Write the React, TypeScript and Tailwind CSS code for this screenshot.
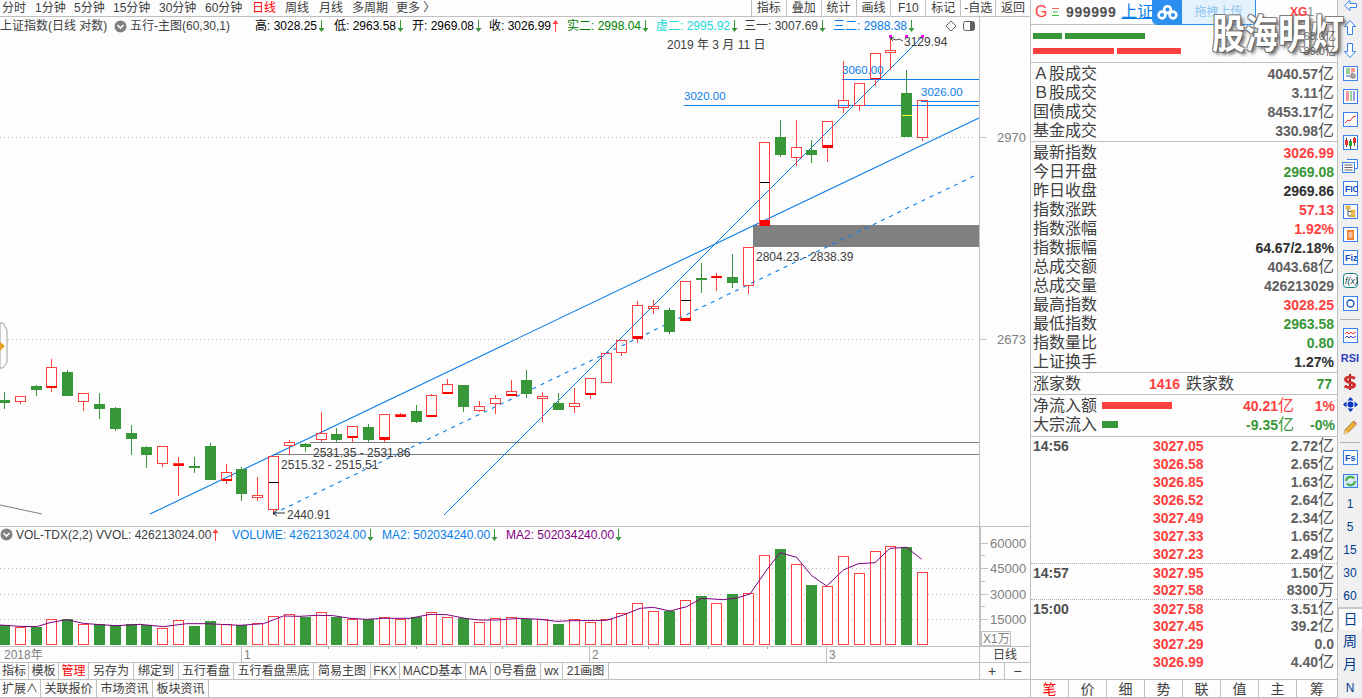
import React from "react";

const GREEN = "#389738";
const RED = "#ff4040";
const BLUE = "#0a7ee8";
const PURPLE = "#800080";

type Candle = [string, number, number, number, number, number?, number?];

// kind, body top, body bottom, wick top, wick bottom, thick base, mid mark
const candles: Candle[] = [
  ["g", 400, 403, 392, 409],
  ["r", 396, 401, 396, 404],
  ["g", 386, 390, 385, 396],
  ["r", 367, 387, 359, 392, 2],
  ["g", 372, 396, 370, 396],
  ["r", 393, 401, 393, 411],
  ["g", 404, 409, 393, 419],
  ["g", 408, 429, 407, 431],
  ["g", 433, 439, 425, 455],
  ["g", 447, 455, 446, 468],
  ["r", 446, 463, 446, 467],
  ["r", 463, 465, 457, 496, 2],
  ["g", 466, 468, 457, 473],
  ["g", 446, 480, 443, 480],
  ["r", 472, 480, 464, 484, 2],
  ["g", 469, 494, 467, 501],
  ["r", 495, 497, 477, 501],
  ["r", 456, 509, 456, 515, 0, 482],
  ["r", 442, 445, 440, 455],
  ["g", 444, 447, 443, 452],
  ["r", 433, 439, 412, 442],
  ["g", 434, 440, 428, 442],
  ["r", 426, 437, 426, 442, 2],
  ["g", 427, 440, 424, 442],
  ["r", 414, 439, 414, 442, 3],
  ["r", 414, 416, 413, 417, 2],
  ["g", 411, 422, 405, 423],
  ["r", 395, 416, 394, 417, 2],
  ["r", 384, 393, 379, 394, 2],
  ["g", 385, 407, 385, 412],
  ["r", 406, 410, 401, 412],
  ["r", 398, 403, 395, 414],
  ["r", 391, 395, 380, 396, 2],
  ["g", 380, 394, 370, 398],
  ["r", 396, 398, 392, 422],
  ["g", 403, 410, 393, 410],
  ["r", 403, 406, 388, 413],
  ["r", 378, 394, 378, 399, 2],
  ["r", 353, 382, 353, 382],
  ["r", 340, 352, 340, 356],
  ["r", 305, 338, 301, 343, 3],
  ["r", 306, 308, 300, 314],
  ["g", 310, 332, 308, 334],
  ["r", 281, 320, 281, 321, 3, 300],
  ["g", 278, 280, 263, 293],
  ["r", 276, 277, 273, 291, 2],
  ["g", 277, 283, 254, 288],
  ["r", 247, 285, 247, 294],
  ["r", 142, 225, 142, 225, 6, 182],
  ["g", 137, 155, 120, 157],
  ["r", 147, 157, 120, 166],
  ["g", 150, 155, 140, 163],
  ["r", 121, 147, 121, 162, 3],
  ["r", 100, 107, 61, 113],
  ["r", 83, 105, 83, 111],
  ["r", 53, 78, 53, 86, 1],
  ["r", 50, 52, 36, 70],
  ["g", 93, 137, 70, 137, 0, 115],
  ["r", 100, 137, 100, 141],
];

const volTops = [
  315, 322, 321, 298, 298, 313, 312, 316, 312, 314, 325, 301, 318, 303, 312, 316, 310, 289, 283, 290,
  277, 291, 298, 298, 292, 298, 291, 277, 292, 294, 307, 295, 292, 297, 296, 312, 296, 307, 296, 280,
  250, 274, 272, 241, 228, 250, 222, 220, 106, 87, 133, 195, 199, 109, 160, 94, 79, 81, 157,
];

const maLeft = [
  [0, 315], [60, 319], [110, 320], [150, 308], [200, 299], [250, 310], [300, 314], [350, 317], [420, 313],
  [490, 320], [560, 311], [620, 311], [720, 316], [790, 311], [850, 288], [900, 289], [950, 286], [1000, 287],
  [1050, 295], [1100, 298], [1150, 295], [1230, 295], [1290, 283], [1340, 284], [1400, 296], [1440, 300],
  [1490, 300], [1560, 295],
];
const maRight = [
  [0, 295], [60, 298], [110, 304], [160, 302], [260, 301], [310, 285], [360, 265], [400, 262], [450, 273],
  [500, 260], [545, 235], [610, 239], [650, 234], [690, 222], [740, 150], [780, 98], [830, 112], [875, 167],
  [920, 198], [970, 150], [1015, 131], [1065, 128], [1110, 85], [1160, 82], [1205, 118],
];
const maPoints = [
  ...maLeft.map(([x, y]) => `${x / 3},${520 + y / 3}`),
  ...maRight.map(([x, y]) => `${520 + x / 3},${520 + y / 3}`),
].join(" ");

const cx = (i: number) => Math.round(4 + 15.83 * i);

function Arrow({ up }: { up?: boolean }) {
  const c = up ? RED : GREEN;
  return (
    <svg width="7" height="14" viewBox="0 0 7 14" className="inline-block ml-[1px] align-[-3px]">
      {up ? <path d="M3.5 13V3" stroke={c} strokeWidth="1" /> : <path d="M3.5 1v10" stroke={c} strokeWidth="1" />}
      {up ? <path d="M0.5 5L3.5 1l3 4z" fill={c} /> : <path d="M0.5 9l3 4 3-4z" fill={c} />}
    </svg>
  );
}

function Chevron() {
  return (
    <svg width="13" height="13" viewBox="0 0 13 13">
      <circle cx="6.5" cy="6.5" r="6" fill="#808080" />
      <path d="M3.5 5l3 3 3-3" stroke="#fff" strokeWidth="1.6" fill="none" />
    </svg>
  );
}

function PriceChart() {
  return (
    <svg viewBox="0 17 1030 509" width="1030" height="509" className="absolute inset-0">
      <line x1="0" x2="975" y1="137.5" y2="137.5" stroke="#b8b8b8" strokeDasharray="1 3" />
      <line x1="0" x2="975" y1="339.5" y2="339.5" stroke="#b8b8b8" strokeDasharray="1 3" />
      <line x1="979.5" x2="979.5" y1="17" y2="526" stroke="#c0c0c0" />
      <line x1="979" x2="986" y1="137.5" y2="137.5" stroke="#c0c0c0" />
      <line x1="979" x2="986" y1="339.5" y2="339.5" stroke="#c0c0c0" />
      <text x="997" y="142" fontSize="13" fill="#808080">2970</text>
      <text x="997" y="344" fontSize="13" fill="#808080">2673</text>

      <rect x="753" y="225" width="226" height="22" fill="#808080" />
      <g shapeRendering="crispEdges">
        <line x1="310" x2="979" y1="442.5" y2="442.5" stroke="#808080" />
        <line x1="273" x2="979" y1="454.5" y2="454.5" stroke="#808080" />
        <line x1="684" x2="979" y1="105.5" y2="105.5" stroke={BLUE} />
        <line x1="842" x2="979" y1="79.5" y2="79.5" stroke={BLUE} />
        <line x1="921" x2="979" y1="101.5" y2="101.5" stroke={BLUE} />
      </g>
      <line x1="0" y1="505" x2="42" y2="514" stroke="#808080" />

      <line x1="150" y1="514" x2="979" y2="118" stroke={BLUE} strokeWidth="1.1" />
      <line x1="444" y1="515" x2="922" y2="37" stroke={BLUE} strokeWidth="1" />
      <line x1="273" y1="514" x2="976" y2="175" stroke={BLUE} strokeWidth="1.1" strokeDasharray="4 5" />

      {candles.map(([kind, top, bottom, wickTop, wickBottom, thick, mid], i) => {
        const x = cx(i);
        const c = kind === "g" ? GREEN : RED;
        return (
          <g key={i} shapeRendering="crispEdges">
            {kind === "g" ? (
              <>
                <line x1={x + 0.5} x2={x + 0.5} y1={wickTop} y2={wickBottom} stroke={c} />
                <rect x={x - 5} y={top} width="11" height={bottom - top} fill={c} />
              </>
            ) : (
              <>
                <line x1={x + 0.5} x2={x + 0.5} y1={wickTop} y2={top} stroke={c} />
                <line x1={x + 0.5} x2={x + 0.5} y1={bottom} y2={wickBottom} stroke={c} />
                <rect x={x - 4.5} y={top + 0.5} width="10" height={bottom - top} fill="none" stroke={c} />
                {thick ? <rect x={x - 4} y={bottom - thick + 1} width="10" height={thick} fill="#ff0000" /> : null}
              </>
            )}
            {mid ? (
              <line x1={x - 4} x2={x + 6} y1={mid + 0.5} y2={mid + 0.5} stroke={kind === "g" ? "#ffff40" : "#000"} />
            ) : null}
          </g>
        );
      })}

      <rect x="889" y="35" width="3" height="3" fill="#ff00ff" />
      <rect x="905" y="35" width="3" height="3" fill="#ff00ff" />
      <rect x="921" y="35" width="3" height="3" fill="#ff00ff" />
      <path d="M890 38l3 3M890 38l4-1M890 38l6 2 3-1 4 2" stroke="#505050" fill="none" />
      <path d="M273 513h12M273 513l4-3M273 513l4 3" stroke="#303030" fill="none" />

      <path d="M0 323h3l4 7v32l-4 6H0z" fill="#fdfdfd" stroke="#a0a0a0" />
      <path d="M0 342l5 4-5 5z" fill="#e8a020" />

      <g fontSize="12" fill="#404040">
        <text x="904" y="46">3129.94</text>
        <text x="281" y="469">2515.32 - 2515.51</text>
        <text x="313" y="457">2531.35 - 2531.86</text>
        <text x="287" y="519">2440.91</text>
        <text x="756" y="261">2804.23 - 2838.39</text>
        <text x="667" y="49">2019 年 3 月 11 日</text>
      </g>
      <g fontSize="11.5" fill={BLUE}>
        <text x="842" y="74">3060.00</text>
        <text x="921" y="96">3026.00</text>
        <text x="684" y="100">3020.00</text>
      </g>
    </svg>
  );
}

function VolumeChart() {
  return (
    <svg viewBox="0 527 1030 119" width="1030" height="119" className="absolute inset-0">
      {[568.5, 594.5, 619.5].map((y) => (
        <line key={y} x1="0" x2="979" y1={y} y2={y} stroke="#b8b8b8" strokeDasharray="1 3" />
      ))}
      {volTops.map((z, i) => {
        const x = cx(i);
        const top = Math.round(520 + z / 3);
        return candles[i][0] === "g" ? (
          <rect key={i} x={x - 5} y={top} width="11" height={645 - top} fill={GREEN} shapeRendering="crispEdges" />
        ) : (
          <rect
            key={i}
            x={x - 4.5}
            y={top + 0.5}
            width="10"
            height={644 - top}
            fill="#fdfdfd"
            stroke={RED}
            shapeRendering="crispEdges"
          />
        );
      })}
      <polyline points={maPoints} fill="none" stroke={PURPLE} strokeWidth="1" />
      <rect x="979" y="527" width="2" height="119" fill="#c0c0c0" />
      {[543, 568, 594, 619].map((y) => (
        <line key={y} x1="981" x2="988" y1={y + 0.5} y2={y + 0.5} stroke="#c0c0c0" />
      ))}
      {[555, 581, 606].map((y) => (
        <line key={y} x1="981" x2="985" y1={y + 0.5} y2={y + 0.5} stroke="#c0c0c0" />
      ))}
      <g fontSize="13" fill="#808080">
        <text x="990" y="548">60000</text>
        <text x="990" y="573">45000</text>
        <text x="990" y="599">30000</text>
        <text x="990" y="624">15000</text>
      </g>
      <rect x="981.5" y="631.5" width="29" height="14" fill="#fdfdfd" stroke="#c0c0c0" />
      <text x="983" y="643" fontSize="12" fill="#808080">X1万</text>
    </svg>
  );
}

function AxisStrip() {
  return (
    <svg viewBox="0 647 979 15" width="979" height="15" className="block">
      {[241.5, 589.5, 826.5].map((x) => (
        <line key={x} x1={x} x2={x} y1="647" y2="662" stroke="#c0c0c0" />
      ))}
      {[328.5, 416.5, 502.5, 648.5, 708.5, 767.5].map((x) => (
        <line key={x} x1={x} x2={x} y1="647" y2="649" stroke="#a0a0a0" />
      ))}
      <g fontSize="12" fill="#808080">
        <text x="4" y="659">2018年</text>
        <text x="244" y="659">1</text>
        <text x="592" y="659">2</text>
        <text x="829" y="659">3</text>
      </g>
    </svg>
  );
}

const tabsOne = [
  ["指标", "w-[29px]"],
  ["模板", "w-[30px]"],
  ["管理", "w-[30px] text-[#ff0000]"],
  ["另存为", "w-[45px]"],
  ["绑定到", "w-[45px]"],
  ["五行看盘", "w-[55px]"],
  ["五行看盘黑底", "w-[80px]"],
  ["简易主图", "w-[57px]"],
  ["FKX", "w-[29px]"],
  ["MACD基本", "w-[66px]"],
  ["MA", "w-[25px]"],
  ["0号看盘", "w-[50px]"],
  ["wx", "w-[22px]"],
  ["21画图", "w-[46px]"],
];
const tabsTwo = [
  ["扩展∧", "w-[41px]"],
  ["关联报价", "w-[56px]"],
  ["市场资讯", "w-[56px]"],
  ["板块资讯", "w-[56px]"],
];

function LeftColumn() {
  return (
    <div className="w-[1030px] flex flex-col shrink-0 text-[12px] text-[#404040]">
      {/* period bar */}
      <div className="h-[17px] flex items-center border-b border-[#c0c0c0] pl-[2px] leading-none">
        <span className="w-[33px]">分时</span>
        <span className="w-[39px]">1分钟</span>
        <span className="w-[39px]">5分钟</span>
        <span className="w-[46px]">15分钟</span>
        <span className="w-[46px]">30分钟</span>
        <span className="w-[47px]">60分钟</span>
        <span className="w-[33px] text-[#ff0000]">日线</span>
        <span className="w-[34px]">周线</span>
        <span className="w-[33px]">月线</span>
        <span className="w-[44px]">多周期</span>
        <span>更多 〉</span>
        <div className="ml-auto flex h-full">
          {["指标", "叠加", "统计", "画线", "F10", "标记", "-自选", "返回"].map((t) => (
            <span key={t} className="w-[34.9px] flex items-center justify-center border-l border-[#c0c0c0]">
              {t}
            </span>
          ))}
        </div>
      </div>

      {/* price panel */}
      <div className="relative h-[510px] border-b border-[#c0c0c0]">
        <PriceChart />
        <div className="relative h-[18px] flex items-center whitespace-nowrap">
          <span className="w-[114px]">上证指数(日线 对数)</span>
          <span className="w-[16px] flex"><Chevron /></span>
          <span className="w-[125px]">五行-主图(60,30,1)</span>
          <span className="w-[79px] text-black">高: 3028.25<Arrow /></span>
          <span className="w-[78px] text-black">低: 2963.58<Arrow /></span>
          <span className="w-[77px] text-black">开: 2969.08<Arrow /></span>
          <span className="w-[78px] text-black">收: 3026.99<Arrow up /></span>
          <span className="w-[89px] text-[#008000]">实二: 2998.04<Arrow /></span>
          <span className="w-[88px] text-[#20d8d8]">虚二: 2995.92<Arrow /></span>
          <span className="w-[89px] text-[#404040]">三一: 3007.69<Arrow /></span>
          <span className="w-[112px] text-[#0a7ee8]">三二: 2988.38<Arrow /></span>
          <svg width="12" height="12" viewBox="0 0 12 12">
            <path d="M6 1l5 5-5 5-5-5z" fill="none" stroke="#606060" />
          </svg>
          <svg width="13" height="12" viewBox="0 0 13 12" className="ml-[6px]">
            <rect x="0.5" y="1.5" width="11" height="9" rx="2" fill="none" stroke="#606060" />
            <rect x="7" y="2" width="4" height="8" fill="#606060" />
          </svg>
        </div>
      </div>

      {/* volume panel */}
      <div className="relative h-[120px] border-b border-[#c0c0c0]">
        <VolumeChart />
        <div className="relative h-[15px] flex items-center whitespace-nowrap">
          <span className="w-[16px] flex"><Chevron /></span>
          <span className="w-[80px]">VOL-TDX(2,2)</span>
          <span className="w-[136px]">VVOL: 426213024.00<Arrow up /></span>
          <span className="w-[150px] text-[#0a7ee8]">VOLUME: 426213024.00<Arrow /></span>
          <span className="w-[124px] text-[#0a7ee8]">MA2: 502034240.00<Arrow /></span>
          <span className="text-[#800080]">MA2: 502034240.00<Arrow /></span>
        </div>
      </div>

      {/* time axis */}
      <div className="h-[16px] flex border-b border-[#c0c0c0]">
        <div className="w-[979px]"><AxisStrip /></div>
        <div className="flex-1 border-l border-[#c0c0c0] flex items-center justify-center text-[#404040]">日线</div>
      </div>

      {/* template tabs */}
      <div className="h-[17px] flex border-b border-[#c0c0c0]">
        <div className="w-[979px] flex">
          {tabsOne.map(([t, w]) => (
            <span key={t} className={`${w} shrink-0 flex items-center justify-center border-r border-[#c0c0c0]`}>{t}</span>
          ))}
        </div>
        <span className="w-[26px] border-l border-r border-[#c0c0c0] flex items-center justify-center text-[14px]">+</span>
        <span className="flex-1 flex items-center justify-center text-[14px]">−</span>
      </div>
      <div className="h-[18px] flex border-b border-[#c0c0c0]">
        {tabsTwo.map(([t, w]) => (
          <span key={t} className={`${w} shrink-0 flex items-center justify-center border-r border-[#c0c0c0]`}>{t}</span>
        ))}
      </div>
    </div>
  );
}

function Stat({ label, value, unit, color }: { label: string; value: string; unit?: string; color?: string }) {
  return (
    <div className="h-[19px] flex items-center justify-between pl-[2px] pr-[3px]">
      <span className="text-[16px] leading-none text-[#404040]">{label}</span>
      <span className={`flex items-center text-[14px] font-bold leading-none ${color ?? "text-[#606060]"}`}>
        {value}
        {unit ? <span className="text-[16px] font-normal text-[#505050]">{unit}</span> : null}
      </span>
    </div>
  );
}

const ticks: [string, string, string, string, boolean?][] = [
  ["14:56", "3027.05", "2.72", "亿"],
  ["", "3026.58", "2.65", "亿"],
  ["", "3026.85", "1.63", "亿"],
  ["", "3026.52", "2.64", "亿"],
  ["", "3027.49", "2.34", "亿"],
  ["", "3027.33", "1.65", "亿"],
  ["", "3027.23", "2.49", "亿"],
  ["14:57", "3027.95", "1.50", "亿", true],
  ["", "3027.58", "8300", "万"],
  ["15:00", "3027.58", "3.51", "亿", true],
  ["", "3027.45", "39.2", "亿"],
  ["", "3027.29", "0.0", ""],
  ["", "3026.99", "4.40", "亿"],
];

function InfoPanel() {
  const r = "text-[#ff4040]";
  const g = "text-[#389738]";
  const k = "text-[#303030]";
  return (
    <div className="relative w-[308px] shrink-0 border-l border-r border-[#c0c0c0] flex flex-col">
      {/* code header */}
      <div className="h-[25px] flex items-center border-b border-[#c0c0c0] pl-[4px] relative">
        <span className="text-[16px] text-[#ff4040] w-[17px]">G</span>
        <svg width="8" height="10" viewBox="0 0 8 10" className="mr-[6px]">
          <path d="M0 1.5h7" stroke="#ff6060" />
          <path d="M1 5h5" stroke="#30c030" />
          <path d="M0 8.5h7" stroke="#30c030" />
        </svg>
        <span className="text-[14px] font-bold text-[#505050] tracking-[0.6px]">999999</span>
        <span className="ml-[5px] text-[16px] text-[#0a7ee8] underline">上证指数</span>
        <span className="absolute left-[259px] top-[3px] z-10 text-[12px] font-bold text-[#ff4040]">
          XG<span className="font-normal text-[#808080]">1</span>
        </span>
      </div>

      {/* order book bars */}
      <div className="h-[38px] border-b border-[#c0c0c0] relative pl-[2px] pt-[8px]">
        <div className="flex gap-[3px]">
          <div className="w-[29px] h-[6px] bg-[#389738]" />
          <div className="w-[80px] h-[6px] bg-[#389738]" />
        </div>
        <div className="flex gap-[3px] mt-[9px]">
          <div className="w-[81px] h-[6px] bg-[#ff4040]" />
          <div className="w-[64px] h-[6px] bg-[#ff4040]" />
        </div>
        <span className="absolute z-10 right-[1px] top-[3px] text-[11px] text-[#606060]">68.0亿</span>
        <span className="absolute z-10 right-[1px] top-[18px] text-[11px] text-[#606060]">89.0亿</span>
      </div>

      <div className="h-[79px] pt-[1px] border-b border-[#c0c0c0]">
        <Stat label="Ａ股成交" value="4040.57" unit="亿" />
        <Stat label="Ｂ股成交" value="3.11" unit="亿" />
        <Stat label="国债成交" value="8453.17" unit="亿" />
        <Stat label="基金成交" value="330.98" unit="亿" />
      </div>

      <div className="h-[231px] pt-[1px] border-b border-[#c0c0c0]">
        <Stat label="最新指数" value="3026.99" color={r} />
        <Stat label="今日开盘" value="2969.08" color={g} />
        <Stat label="昨日收盘" value="2969.86" color={k} />
        <Stat label="指数涨跌" value="57.13" color={r} />
        <Stat label="指数涨幅" value="1.92%" color={r} />
        <Stat label="指数振幅" value="64.67/2.18%" color={k} />
        <Stat label="总成交额" value="4043.68" unit="亿" />
        <Stat label="总成交量" value="426213029" />
        <Stat label="最高指数" value="3028.25" color={r} />
        <Stat label="最低指数" value="2963.58" color={g} />
        <Stat label="指数量比" value="0.80" color={g} />
        <Stat label="上证换手" value="1.27%" color={k} />
      </div>

      <div className="h-[22px] border-b border-[#c0c0c0] flex items-center pl-[2px] pr-[5px]">
        <span className="w-[116px] text-[16px] leading-none text-[#404040]">涨家数</span>
        <span className="w-[37px] text-[14px] font-bold leading-none text-[#ff4040]">1416</span>
        <span className="text-[16px] leading-none text-[#404040]">跌家数</span>
        <span className="ml-auto text-[14px] font-bold leading-none text-[#389738]">77</span>
      </div>

      <div className="h-[42px] pt-[1px] border-b border-[#c0c0c0] text-[14px] font-bold">
        <div className="h-[19px] flex items-center pl-[2px] pr-[2px]">
          <span className="w-[69px] text-[16px] leading-none font-normal text-[#404040]">净流入额</span>
          <div className="w-[70px] h-[7px] bg-[#ff4040]" />
          <span className="ml-auto flex items-center leading-none text-[#ff4040]">
            40.21<span className="text-[16px] font-normal">亿</span>
          </span>
          <span className="w-[41px] text-right leading-none text-[#ff4040]">1%</span>
        </div>
        <div className="h-[19px] flex items-center pl-[2px] pr-[2px]">
          <span className="w-[69px] text-[16px] leading-none font-normal text-[#404040]">大宗流入</span>
          <div className="w-[16px] h-[7px] bg-[#389738]" />
          <span className="ml-auto flex items-center leading-none text-[#389738]">
            -9.35<span className="text-[16px] font-normal">亿</span>
          </span>
          <span className="w-[41px] text-right leading-none text-[#389738]">-0%</span>
        </div>
      </div>

      {/* tick list */}
      <div className="flex-1">
        {ticks.map(([time, price, vol, unit, sep], i) => (
          <div
            key={i}
            className={`h-[18px] flex items-center pl-[2px] pr-[3px] text-[14px] font-bold leading-none ${
              sep ? "border-t border-dotted border-[#b0b0b0]" : ""
            }`}
          >
            <span className="w-[120px] text-[#505050]">{time}</span>
            <span className="text-[#ff4040]">{price}</span>
            <span className="ml-auto flex items-center text-[#606060]">
              {vol}
              {unit ? <span className="text-[16px] font-normal text-[#505050]">{unit}</span> : null}
            </span>
          </div>
        ))}
      </div>

      <div className="h-[19px] flex border-t border-b border-[#c0c0c0] text-[14px] leading-none text-[#404040]">
        {["笔", "价", "细", "势", "联", "值", "主", "筹"].map((t, i) => (
          <span
            key={t}
            className={`flex items-center justify-center ${i === 7 ? "flex-1" : "w-[38px] border-r border-[#c0c0c0]"} ${
              i === 0 ? "text-[#ff0000]" : ""
            }`}
          >
            {t}
          </span>
        ))}
      </div>

      {/* upload widget floating over the quote header */}
      <div className="absolute left-[121px] top-0 w-[104px] h-[25px] flex rounded-b-[5px] overflow-hidden border border-[#2b8ff0] border-t-0">
        <div className="w-[29px] bg-[#2b8ff0] flex items-center justify-center">
          <svg width="21" height="15" viewBox="0 0 21 15" fill="none" stroke="#fff" strokeWidth="2.6">
            <circle cx="5" cy="10" r="3.4" />
            <circle cx="16" cy="10" r="3.4" />
            <circle cx="10.5" cy="4.6" r="3.4" />
          </svg>
        </div>
        <div className="flex-1 bg-[#e4f2fd] flex items-center justify-center text-[12px] text-[#8cc4f0]">拖拽上传</div>
      </div>

      {/* watermark */}
      <div className="absolute left-[181px] top-[13px] whitespace-nowrap text-[33px] leading-[36px] font-bold text-white origin-top scale-y-[1.2] [text-shadow:1px_1px_0_#606060,-1px_-1px_0_#808080,1px_-1px_0_#808080,-1px_1px_0_#808080,3px_3px_3px_#707070]">
        股海明灯
      </div>
    </div>
  );
}

function Box({ children }: { children: React.ReactNode }) {
  return (
    <svg width="15" height="15" viewBox="0 0 15 15">
      <rect x="0.5" y="0.5" width="14" height="14" fill="#fff" stroke="#3a80f0" />
      {children}
    </svg>
  );
}

function Slot({ children, cls }: { children: React.ReactNode; cls?: string }) {
  return <div className={`h-[23px] flex items-center justify-center shrink-0 ${cls ?? ""}`}>{children}</div>;
}

function Toolbar() {
  const n = "text-[12px] text-[#003c90]";
  const arrowStroke = { fill: "#fff", stroke: "#3a80f0", strokeWidth: 1 };
  return (
    <div className="flex-1 bg-[#f0f0f0] flex flex-col overflow-hidden">
      <div className="h-[11px] flex items-end justify-center shrink-0">
        <svg width="13" height="11" viewBox="0 0 13 11">
          <path d="M6 0.5L0.5 5.5 6 10.5V7.5h6.5v-4H6z" {...arrowStroke} />
        </svg>
      </div>
      <Slot cls="mt-[5px]">
        <svg width="12" height="15" viewBox="0 0 12 15"><path d="M6 .5L.5 6.5h3v8h5v-8h3z" {...arrowStroke} /></svg>
      </Slot>
      <Slot>
        <svg width="12" height="15" viewBox="0 0 12 15"><path d="M6 14.5L.5 8.5h3v-8h5v8h3z" {...arrowStroke} /></svg>
      </Slot>
      <Slot>
        <Box>
          <path d="M3 3h4M3 5h4M3 7h4" stroke="#30a030" />
          <path d="M8 3h4M8 5h4M8 7h2" stroke="#f03030" />
          <path d="M3 10h4" stroke="#3060c0" />
          <circle cx="10" cy="10" r="3" fill="#a0a0a0" />
        </Box>
      </Slot>
      <Slot>
        <Box>
          <path d="M3 3h3M3 5h3M3 7h3M3 9h3M3 11h3" stroke="#f03030" />
          <path d="M7 3h2M7 5h2M7 7h2M7 9h2M7 11h2" stroke="#30a030" />
          <path d="M10 3h2M10 5h2M10 7h2M10 9h2M10 11h2" stroke="#2040e0" />
        </Box>
      </Slot>
      <Slot>
        <Box>
          <path d="M2 11l3-3 2 1 3-4 3-1" stroke="#f03030" fill="none" />
        </Box>
      </Slot>
      <Slot>
        <Box>
          <path d="M3.5 3v9M7.5 4v10M11.5 2v9" stroke="#404040" />
          <rect x="2" y="5" width="3" height="5" fill="#f03030" />
          <rect x="6" y="6" width="3" height="5" fill="#30a030" />
          <rect x="10" y="3" width="3" height="5" fill="#f03030" />
        </Box>
      </Slot>
      <Slot>
        <svg width="16" height="14" viewBox="0 0 16 14">
          <path d="M5 .5h10.500v9H13" fill="#fff" stroke="#3a80f0" />
          <rect x="0.5" y="3.5" width="12" height="10" fill="#fff" stroke="#3a80f0" />
          <path d="M2.500 6h8M2.500 8.500h8M2.500 11h8" stroke="#606060" />
        </svg>
      </Slot>
      <Slot>
        <Box>
          <text x="2" y="11" fontSize="8.500" fontWeight="bold" fill="#1050c0">FIO</text>
        </Box>
      </Slot>
      <Slot>
        <Box>
          <rect x="3" y="2" width="4" height="3" fill="#f0c040" stroke="#c09020" strokeWidth=".5" />
          <rect x="8" y="6" width="4" height="3" fill="#f0c040" stroke="#c09020" strokeWidth=".5" />
          <rect x="8" y="10" width="4" height="3" fill="#f0c040" stroke="#c09020" strokeWidth=".5" />
          <path d="M5 5v7h3M5 7.500h3" stroke="#606060" fill="none" />
        </Box>
      </Slot>
      <Slot>
        <Box>
          <rect x="4" y="3" width="7" height="10" fill="#f08030" />
          <path d="M5.500 6h4M5.500 8h4M5.500 10h4" stroke="#fff" />
        </Box>
      </Slot>
      <Slot>
        <Box>
          <text x="2" y="11" fontSize="9" fontWeight="bold" fill="#1050c0">Fiz</text>
        </Box>
      </Slot>
      <Slot>
        <svg width="15" height="15" viewBox="0 0 15 15">
          <rect x="0.5" y="0.5" width="14" height="14" rx="3" fill="#fff" stroke="#108080" />
          <text x="2" y="11" fontSize="9" fontStyle="italic" fill="#104050">f(x)</text>
        </svg>
      </Slot>
      <Slot>
        <Box>
          <circle cx="7.5" cy="7.5" r="3.5" fill="none" stroke="#1050c0" strokeWidth="1.3" />
        </Box>
      </Slot>
      <div className="h-[1px] bg-[#b0b0b0] mt-[4px] mx-[2px] shrink-0" />
      <Slot cls="mt-[4px]">
        <Box>
          <path d="M2 6l2-2 2 2 2-2 2 2 3-2" stroke="#f03030" fill="none" />
          <path d="M2 10l2-2 2 2 2-2 2 2 3-2" stroke="#4040e0" fill="none" />
        </Box>
      </Slot>
      <Slot>
        <span className="text-[11px] font-bold text-[#3040c0] leading-none">RSI</span>
      </Slot>
      <Slot>
        <svg width="14" height="16" viewBox="0 0 14 16">
          <rect x="6" y="0" width="2" height="16" fill="#a02020" />
          <path d="M12 4.500C9 2.500 2.500 2.500 2.500 5.500c0 3.500 9 2.500 9 5.500 0 3-6.500 3-10 1" fill="none" stroke="#d03030" strokeWidth="3" />
        </svg>
      </Slot>
      <Slot>
        <svg width="15" height="15" viewBox="0 0 15 15" fill="#0838c0">
          <path d="M7.500 0l3 3.500h-6zM7.500 15l3-3.500h-6zM0 7.500l3.500-3v6zM15 7.500l-3.500-3v6z" />
          <circle cx="7.500" cy="7.500" r="3" />
        </svg>
      </Slot>
      <Slot>
        <svg width="15" height="15" viewBox="0 0 15 15">
          <path d="M1 14l1-4 8-8.500 3 3-8 8z" fill="#f0b030" stroke="#806020" strokeWidth=".7" />
          <path d="M10 1.500l3 3 1-1-3-3z" fill="#e07070" />
          <path d="M1 14l1-4 3 3z" fill="#f0d8a0" />
        </svg>
      </Slot>
      <div className="h-[1px] bg-[#b0b0b0] mt-[3px] mx-[2px] shrink-0" />
      <Slot cls="mt-[3px]">
        <Box>
          <text x="2" y="11" fontSize="9" fontWeight="bold" fill="#1050c0">Fs</text>
        </Box>
      </Slot>
      <Slot>
        <svg width="15" height="14" viewBox="0 0 15 14">
          <rect x="0.5" y="0.5" width="14" height="13" fill="#d8e8f8" stroke="#3a80f0" />
          <path d="M3 7a4.500 4.500 0 0 1 8-2.500M12 7a4.500 4.500 0 0 1-8 2.500" fill="none" stroke="#40b040" strokeWidth="2" />
        </svg>
      </Slot>
      <Slot><span className={n}>1</span></Slot>
      <Slot><span className={n}>5</span></Slot>
      <Slot><span className={n}>15</span></Slot>
      <Slot><span className={n}>30</span></Slot>
      <Slot><span className={n}>60</span></Slot>
      <Slot cls="bg-[#fdfdfd] border-t-2 border-l border-[#c8c8c8]"><span className="text-[14px] text-[#003c90]">日</span></Slot>
      <Slot><span className="text-[14px] text-[#003c90]">周</span></Slot>
      <Slot><span className="text-[14px] text-[#003c90]">月</span></Slot>
      <Slot><span className={n}>N</span></Slot>
    </div>
  );
}

export default function App() {
  return (
    <div className="w-[1362px] h-[698px] flex overflow-hidden bg-[#fdfdfd] font-['Liberation_Sans','Noto_Sans_CJK_SC',sans-serif]">
      <LeftColumn />
      <InfoPanel />
      <Toolbar />
    </div>
  );
}
